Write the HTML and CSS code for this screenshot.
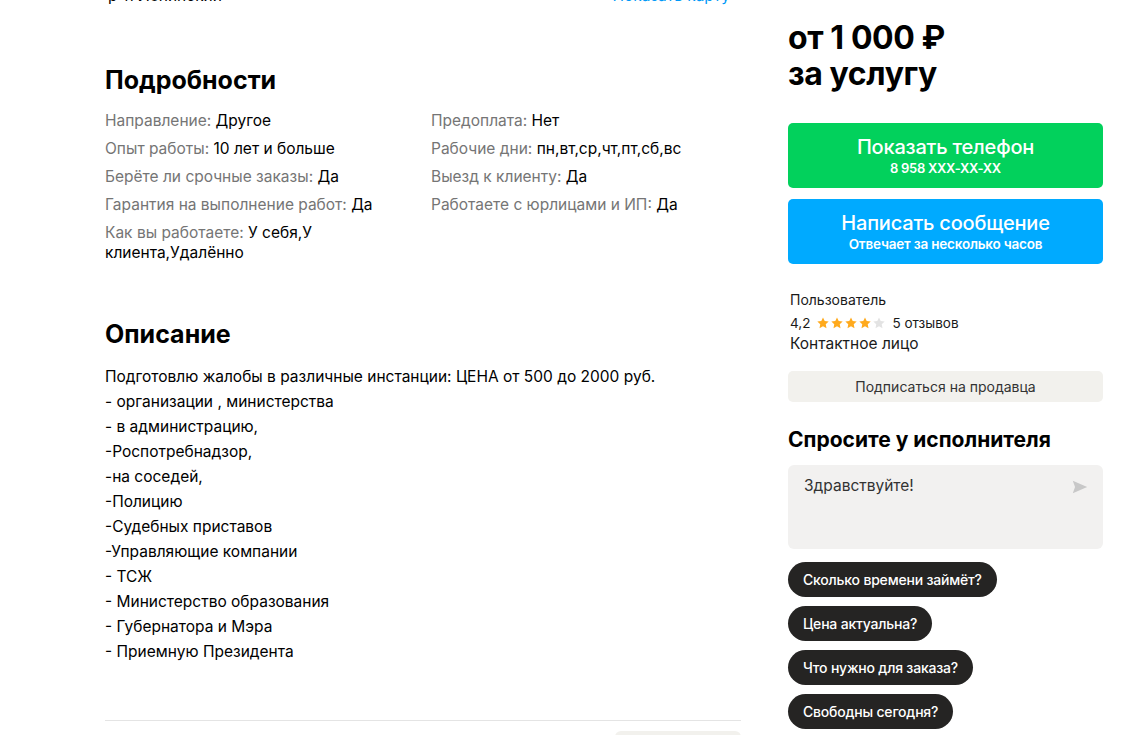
FILE: index.html
```html
<!DOCTYPE html>
<html lang="ru">
<head>
<meta charset="utf-8">
<title>Услуга</title>
<link rel="stylesheet" href="styles.css">
</head>
<body>
<div class="page">
  <main class="main">
    <div class="address-row">
      <span class="address">р-н Ленинский</span>
      <a class="map-link" href="#">Показать карту</a>
    </div>

    <section class="details">
      <h2 class="heading">Подробности</h2>
      <div class="params">
        <div class="param-col">
          <div class="param"><span class="label">Направление: </span>Другое</div>
          <div class="param"><span class="label">Опыт работы: </span>10 лет и больше</div>
          <div class="param"><span class="label">Берёте ли срочные заказы: </span>Да</div>
          <div class="param"><span class="label">Гарантия на выполнение работ: </span>Да</div>
          <div class="param"><span class="label">Как вы работаете: </span>У себя,У клиента,Удалённо</div>
        </div>
        <div class="param-col">
          <div class="param"><span class="label">Предоплата: </span>Нет</div>
          <div class="param"><span class="label">Рабочие дни: </span>пн,вт,ср,чт,пт,сб,вс</div>
          <div class="param"><span class="label">Выезд к клиенту: </span>Да</div>
          <div class="param"><span class="label">Работаете с юрлицами и ИП: </span>Да</div>
        </div>
      </div>
    </section>

    <section class="description">
      <h2 class="heading">Описание</h2>
      <div class="desc-text">
        <p>Подготовлю жалобы в различные инстанции: ЦЕНА от 500 до 2000 руб.</p>
        <p>- организации , министерства</p>
        <p>- в администрацию,</p>
        <p>-Роспотребнадзор,</p>
        <p>-на соседей,</p>
        <p>-Полицию</p>
        <p>-Судебных приставов</p>
        <p>-Управляющие компании</p>
        <p>- ТСЖ</p>
        <p>- Министерство образования</p>
        <p>- Губернатора и Мэра</p>
        <p>- Приемную Президента</p>
      </div>
    </section>

    <div class="footer-row">
      <span class="footer-btn"></span>
    </div>
  </main>

  <aside class="side">
    <div class="price">от 1&nbsp;000&nbsp;₽<br>за услугу</div>

    <div class="actions">
      <button class="action green">
        <span class="action-title">Показать телефон</span>
        <span class="action-sub">8 958 XXX-XX-XX</span>
      </button>
      <button class="action blue">
        <span class="action-title">Написать сообщение</span>
        <span class="action-sub">Отвечает за несколько часов</span>
      </button>
    </div>

    <div class="seller">
      <div class="seller-name">Пользователь</div>
      <div class="rating">
        <span>4,2</span>
        <span class="stars">
          <svg viewBox="0 0 24 24" class="star on"><path d="M12 2.5l2.9 6.2 6.8.8-5 4.7 1.3 6.7L12 17.6l-6 3.3 1.3-6.7-5-4.7 6.8-.8z"/></svg>
          <svg viewBox="0 0 24 24" class="star on"><path d="M12 2.5l2.9 6.2 6.8.8-5 4.7 1.3 6.7L12 17.6l-6 3.3 1.3-6.7-5-4.7 6.8-.8z"/></svg>
          <svg viewBox="0 0 24 24" class="star on"><path d="M12 2.5l2.9 6.2 6.8.8-5 4.7 1.3 6.7L12 17.6l-6 3.3 1.3-6.7-5-4.7 6.8-.8z"/></svg>
          <svg viewBox="0 0 24 24" class="star on"><path d="M12 2.5l2.9 6.2 6.8.8-5 4.7 1.3 6.7L12 17.6l-6 3.3 1.3-6.7-5-4.7 6.8-.8z"/></svg>
          <svg viewBox="0 0 24 24" class="star off"><path d="M12 2.5l2.9 6.2 6.8.8-5 4.7 1.3 6.7L12 17.6l-6 3.3 1.3-6.7-5-4.7 6.8-.8z"/></svg>
        </span>
        <span>5 отзывов</span>
      </div>
      <div class="seller-type">Контактное лицо</div>
    </div>

    <button class="subscribe">Подписаться на продавца</button>

    <h3 class="ask-title">Спросите у исполнителя</h3>
    <div class="ask-box">
      <span class="ask-text">Здравствуйте!</span>
      <svg class="send" viewBox="0 0 20 20"><path d="M2 3l16 7-16 7 2.5-7z"/></svg>
    </div>

    <div class="chips">
      <span class="chip">Сколько времени займёт?</span>
      <span class="chip">Цена актуальна?</span>
      <span class="chip">Что нужно для заказа?</span>
      <span class="chip">Свободны сегодня?</span>
    </div>
  </aside>
</div>
</body>
</html>
```

FILE: styles.css
```css
* { box-sizing: border-box; }

html, body {
  margin: 0;
  padding: 0;
  background: #fff;
  overflow: hidden;
}

body {
  font-family: Inter, "Noto Sans", "Liberation Sans", sans-serif;
  color: #000;
}

.page {
  display: flex;
  gap: 47px;
  padding-left: 105px;
  height: 735px;
}

.main {
  width: 636px;
  flex: none;
}

.address-row {
  display: flex;
  justify-content: space-between;
  align-items: center;
  height: 20px;
  margin-top: -15px;
  padding: 0 11px 0 3px;
  font-size: 15.5px;
}

.map-link {
  color: #0099f7;
  text-decoration: none;
}

.heading {
  margin: 0;
  font-size: 25px;
  line-height: 32px;
  font-weight: 700;
}

.details {
  margin-top: 59px;
}

.details .heading {
  margin-bottom: 15px;
}

.params {
  display: grid;
  grid-template-columns: 1fr 1fr;
  column-gap: 16px;
}

.param-col {
  display: flex;
  flex-direction: column;
  gap: 8px;
}

.param {
  font-size: 15.5px;
  line-height: 20px;
  color: #000;
}

.label {
  color: #757575;
}

.description {
  margin-top: 55px;
}

.description .heading {
  margin-bottom: 14px;
}

.desc-text p {
  margin: 0;
  font-size: 15.5px;
  line-height: 25px;
}

.footer-row {
  margin-top: 56px;
  border-top: 1px solid #e4e4e4;
  display: flex;
  justify-content: flex-end;
  padding-top: 10px;
}

.footer-btn {
  width: 126px;
  height: 32px;
  border-radius: 6px;
  background: #f2f1ed;
}

.side {
  width: 315px;
  flex: none;
  display: flex;
  flex-direction: column;
  align-items: flex-start;
}

.price {
  margin-top: 20px;
  font-size: 32px;
  line-height: 36px;
  font-weight: 700;
  letter-spacing: -0.4px;
}

.actions {
  margin-top: 31px;
  width: 100%;
  display: flex;
  flex-direction: column;
  gap: 11px;
}

.action {
  width: 100%;
  height: 65px;
  border: none;
  border-radius: 5px;
  color: #fff;
  font-family: inherit;
  display: flex;
  flex-direction: column;
  align-items: center;
  justify-content: center;
  gap: 1px;
  padding: 0;
}

.green { background: #02d15c; }
.blue { background: #00aaff; }

.action-title {
  font-size: 20px;
  line-height: 24px;
  font-weight: 500;
  letter-spacing: -0.2px;
}

.action-sub {
  font-size: 13.5px;
  line-height: 16px;
  font-weight: 600;
  letter-spacing: -0.2px;
}

.green .action-sub {
  font-size: 13px;
  letter-spacing: -0.3px;
}

.seller {
  margin-top: 26px;
  padding-left: 2px;
  display: flex;
  flex-direction: column;
}

.seller-name {
  font-size: 14px;
  line-height: 20px;
  color: #1a1a1a;
}

.rating {
  margin-top: 2px;
  display: flex;
  align-items: center;
  gap: 6px;
  font-size: 13.5px;
  line-height: 22px;
  color: #1a1a1a;
}

.stars {
  display: flex;
  gap: 0;
}

.star {
  width: 14px;
  height: 14px;
}

.star.on { fill: #ffaa1d; }
.star.off { fill: #e3e3e3; }

.seller-type {
  font-size: 15.5px;
  line-height: 20px;
  color: #1a1a1a;
}

.subscribe {
  margin-top: 17px;
  width: 100%;
  height: 31px;
  border: none;
  border-radius: 5px;
  background: #f2f1ed;
  font-family: inherit;
  font-size: 14px;
  color: #333;
}

.ask-title {
  margin: 24px 0 0;
  font-size: 21px;
  line-height: 28px;
  font-weight: 700;
}

.ask-box {
  margin-top: 11px;
  width: 100%;
  height: 84px;
  border-radius: 6px;
  background: #f2f1f0;
  display: flex;
  justify-content: space-between;
  align-items: flex-start;
  padding: 11px 14px 0 16px;
}

.ask-text {
  font-size: 15.5px;
  line-height: 20px;
  color: #333;
}

.send {
  width: 18px;
  height: 18px;
  margin-top: 2px;
  fill: #c8c8c8;
}

.chips {
  margin-top: 13px;
  display: flex;
  flex-direction: column;
  align-items: flex-start;
  gap: 9px;
}

.chip {
  height: 35px;
  display: inline-flex;
  align-items: center;
  padding: 0 15px;
  border-radius: 18px;
  background: #252423;
  color: #fff;
  font-size: 14px;
  font-weight: 500;
  letter-spacing: -0.2px;
}
```
